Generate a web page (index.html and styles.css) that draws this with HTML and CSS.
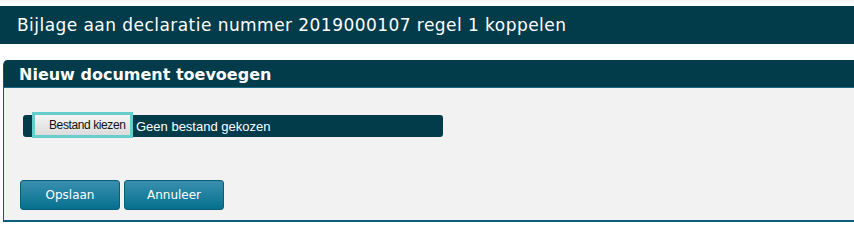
FILE: index.html
```html
<!DOCTYPE html>
<html lang="nl">
<head>
<meta charset="utf-8">
<title>Bijlage koppelen</title>
<link rel="stylesheet" href="styles.css">
</head>
<body>
<div class="page">
  <h1 class="page-title">Bijlage aan declaratie nummer 2019000107 regel 1 koppelen</h1>
  <section class="panel">
    <h2 class="panel-header">Nieuw document toevoegen</h2>
    <div class="panel-body">
      <div class="file-input">
        <span class="file-button">Bestand kiezen</span>
        <span class="file-name">Geen bestand gekozen</span>
      </div>
      <div class="actions">
        <button class="btn" type="button">Opslaan</button>
        <button class="btn" type="button">Annuleer</button>
      </div>
    </div>
  </section>
</div>
</body>
</html>
```
FILE: styles.css
```css
html, body {
  margin: 0;
  padding: 0;
  background: #ffffff;
}
.page {
  padding-top: 6px;
  font-family: "DejaVu Sans", Verdana, sans-serif;
  overflow: hidden;
  height: 233px;
  box-sizing: border-box;
  background: linear-gradient(#f3f3f3, #ffffff 4px);
}
.page-title {
  margin: 0;
  height: 38px;
  box-sizing: border-box;
  padding: 1px 0 0 17px;
  background: #023c4b;
  color: #ffffff;
  font-size: 17px;
  font-weight: normal;
  letter-spacing: 0.45px;
  line-height: 37px;
}
.panel {
  margin: 16px -20px 0 3px;
  border-left: 1px solid #0b5a72;
  border-bottom: 2px solid #0b5f7a;
  border-radius: 5px 0 0 0;
  background: #f2f2f2;
}
.panel-header {
  margin: 0;
  height: 27px;
  padding: 0 0 0 15px;
  background: #023c4b;
  border-bottom: 1px solid #1a6a84;
  border-radius: 4px 0 0 0;
  color: #ffffff;
  font-size: 16px;
  font-weight: bold;
  line-height: 29px;
  overflow: hidden;
}
.panel-body {
  padding: 27px 0 10px 16px;
}
.file-input {
  display: flex;
  align-items: center;
  margin-left: 3px;
  width: 420px;
  height: 22px;
  background: #023c4b;
  border-radius: 3px;
  font-family: "Liberation Sans", Arial, sans-serif;
}
.file-button {
  align-self: flex-start;
  margin-left: 12px;
  height: 20px;
  width: 95px;
  box-sizing: border-box;
  padding-left: 14px;
  outline: 3px solid #66cccc;
  background: linear-gradient(#f4f4f4, #dcdcdc);
  color: #111111;
  font-size: 12px;
  letter-spacing: -0.4px;
  line-height: 21px;
  white-space: nowrap;
}
.file-name {
  margin-left: 6px;
  color: #ffffff;
  font-size: 13px;
}
.actions {
  display: flex;
  gap: 4px;
  margin-top: 43px;
}
.btn {
  width: 100px;
  height: 30px;
  padding: 0;
  border: 1px solid #0a5e7a;
  border-radius: 3px;
  background: linear-gradient(#3a8fae, #06708f);
  color: #ffffff;
  font-family: "DejaVu Sans", Verdana, sans-serif;
  font-size: 12px;
  font-weight: normal;
}
```
